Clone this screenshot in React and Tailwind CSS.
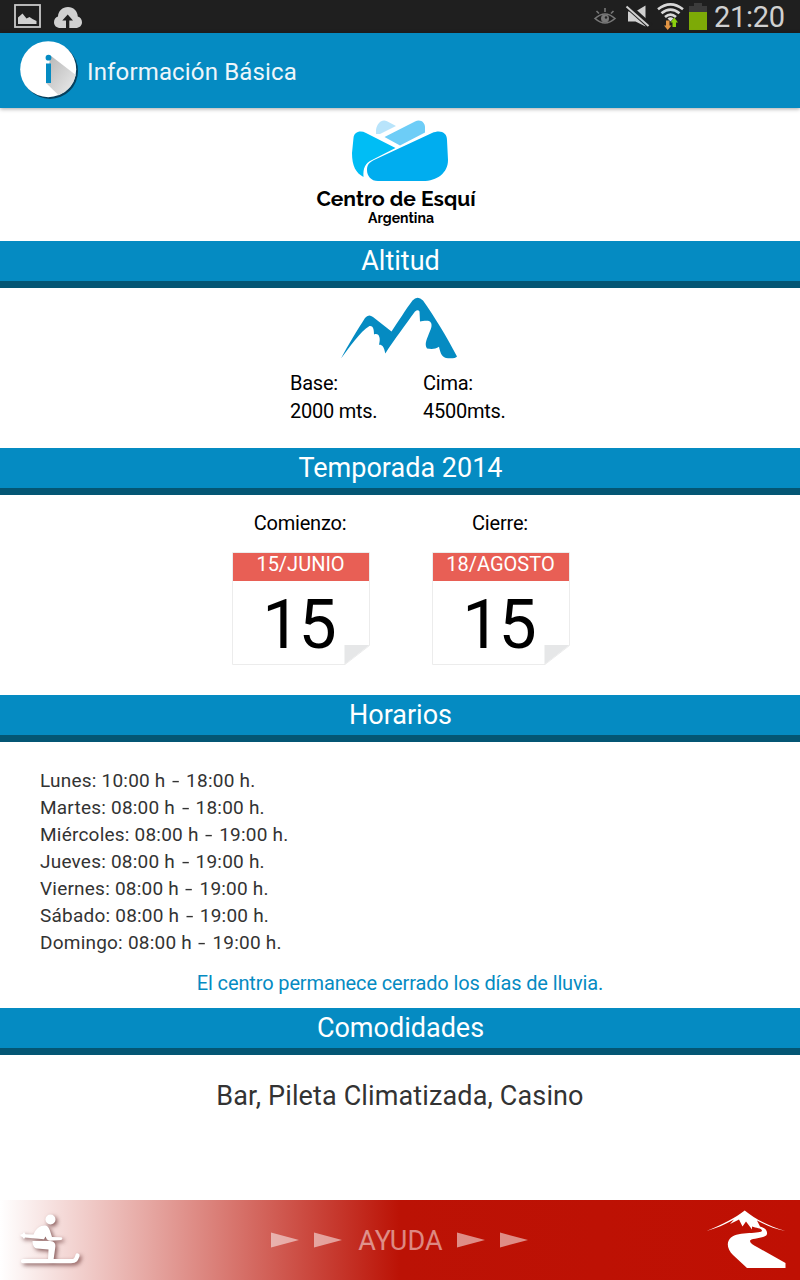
import React from 'react';

const hours = [
  ['Lunes: 10:00 h', '18:00 h.'],
  ['Martes: 08:00 h', '18:00 h.'],
  ['Miércoles: 08:00 h', '19:00 h.'],
  ['Jueves: 08:00 h', '19:00 h.'],
  ['Viernes: 08:00 h', '19:00 h.'],
  ['Sábado: 08:00 h', '19:00 h.'],
  ['Domingo: 08:00 h', '19:00 h.'],
];

function StatusBar() {
  return (
    <div className="flex h-[33px] shrink-0 items-center justify-between bg-[#1f1f1f]">
      <svg width="90" height="33" viewBox="0 0 90 33">
        <rect x="15" y="5" width="25" height="22" fill="none" stroke="#c8c8c8" strokeWidth="1.8" />
        <path d="M18 24V17.500l4.500-4 4 5 3-1.500 3 2 4 2V24z" fill="#d0d0d0" />
        <path d="M60.500 28C56.500 28 54 25.500 54 22.200c0-3 1.700-4.900 4-5.700C58.200 11 62.500 7 68 7c5.500 0 9.500 4 9.800 9.500 2.500.8 4.200 2.800 4.200 5.700 0 3.300-2.500 5.800-6.500 5.800H69.300V20.500H73L67.700 14.500 62.300 20.500H66V28z" fill="#d0d0d0" />
      </svg>
      <div className="flex h-full items-center">
        <svg width="130" height="33" viewBox="584 0 130 33">
          <g stroke="#777" fill="none" strokeWidth="1.6">
            <path d="M595 18.500Q605 9.500 615 18.500Q605 27.500 595 18.500z" />
            <path d="M596.500 11l2.500 2.500M605 8v4M613.500 11l-2.500 2.500" />
          </g>
          <circle cx="605" cy="18.500" r="4" fill="#777" />
          <circle cx="606" cy="17.500" r="1.200" fill="#222" />
          <path d="M628 11.500h7.500L645.500 5.500V26.500L635.500 21.500H628z" fill="#d0d0d0" />
          <path d="M626 4.500L650.500 26.500" stroke="#1f1f1f" strokeWidth="6" />
          <path d="M626.500 6.500L648.500 26" stroke="#d0d0d0" strokeWidth="2" />
          <g fill="none" stroke="#d8d8d8" strokeWidth="2.600">
            <path d="M658 9.300Q670.500-.500 683 9.300" />
            <path d="M661.500 13.300Q670.500 5.800 679.500 13.300" />
            <path d="M665 17Q670.500 12.200 676 17" />
          </g>
          <path d="M667.500 18.500Q670.500 16 673.500 18.500L670.500 21.500z" fill="#ddd" />
          <path d="M666 20.500h3.500v5h2L667.700 30 664 25.500h2z" fill="#e29544" />
          <path d="M672.500 27h3.500v-4.500h2L674.200 17.500 670.500 22.500h2z" fill="#8bd00e" />
          <path d="M694 3h8v3h5v6h-18V6h5z" fill="#3b3b3b" />
          <path d="M689 12h18v18h-18z" fill="#7daa07" />
        </svg>
        <span className="w-[86px] pt-0.5 text-[29px] leading-[33px] tracking-[-0.3px] text-[#d0d0d0]">21:20</span>
      </div>
    </div>
  );
}

function Header() {
  return (
    <header className="z-10 flex h-[75px] shrink-0 items-center bg-[#058bc2] pl-[17px] shadow-[0_1px_4px_rgba(0,0,0,0.35)]">
      <svg width="66" height="66" viewBox="17 38 66 66">
        <circle cx="50" cy="71" r="28" fill="#073f5c" />
        <circle cx="48.200" cy="69.200" r="28" fill="#fff" />
        <defs>
          <linearGradient id="longShadow" x1="0" y1="0" x2="1" y2="1">
            <stop offset="0" stopColor="#b5b5b5" />
            <stop offset="1" stopColor="#ededed" />
          </linearGradient>
        </defs>
        <path d="M50.500 55.500L75.800 75A28 28 0 0 1 58.700 95.200L46 83z" fill="url(#longShadow)" />
        <circle cx="48.500" cy="57.700" r="2.900" fill="#058bc2" />
        <path d="M46 63.500h5V83h-5z" fill="#058bc2" />
      </svg>
      <h1 className="ml-1 pt-0.5 text-[24px] leading-[30px] tracking-[0.15px] text-[#eef6fa]">Información Básica</h1>
    </header>
  );
}

function Logo() {
  return (
    <div className="flex h-[133px] shrink-0 flex-col items-center pt-[9px]">
      <svg width="102" height="68" viewBox="349 117 102 68">
        <path d="M376 134V130C377 123 382 118.500 387 121.200L396 126 380 134z" fill="#b8e4fb" />
        <path d="M384.500 137L415 121.500C420 118.500 425 122 425 127V132.500L400 145.500z" fill="#6dcdf7" />
        <path d="M352 153L353.500 138C354 132 360 130 366 133L395.500 148 372 160C365 163.500 363 168 363.500 177 356 173 352 166 352 153z" fill="#00bdf5" />
        <path d="M367 170C367 165 369 162.500 374 160L432 133C440 129.500 447 132 447 140L448 160C448 173 437 181 423 181H378C371 181 367 176 367 170z" fill="#00adef" />
      </svg>
      <div className="-ml-[8px] mt-0.5 whitespace-nowrap font-['Raleway',Lato,sans-serif] text-[21px] font-bold leading-6 text-black">Centro de Esquí</div>
      <div className="-mt-0.5 ml-0.5 font-['Raleway',Lato,sans-serif] text-[14px] font-bold leading-[18px] text-black">Argentina</div>
    </div>
  );
}

function Band({ children }) {
  return (
    <h2 className="h-[47px] shrink-0 border-b-[7px] border-[#045674] bg-[#058bc2] pl-px text-center text-[27px] leading-10 text-white">{children}</h2>
  );
}

function Calendar({ label, date }) {
  return (
    <div className="flex w-[138px] flex-col items-center">
      <div className="-ml-0.5 text-[20px] leading-7 tracking-[-0.2px] text-black">{label}</div>
      <div className="relative mt-[15px] h-[113px] w-[138px]">
        <svg className="absolute inset-0" width="138" height="113" viewBox="0 0 138 113">
          <path d="M.5.500H137.500V93.500L113 112.500H.5z" fill="#fff" stroke="#ececec" />
          <path d="M1 1h136v28H1z" fill="#e85f55" />
          <path d="M112.500 93H137.500L112.500 112.500z" fill="#e6e7e8" />
        </svg>
        <div className="relative flex flex-col items-center pt-px">
          <div className="-ml-px text-[20px] leading-[23px] text-white">{date}</div>
          <div className="-ml-[5px] mt-[9px] text-[68px] leading-[80px] tracking-[-2px] text-black">15</div>
        </div>
      </div>
    </div>
  );
}

function Arrow() {
  return (
    <svg width="28" height="16" viewBox="0 0 28 16">
      <path d="M0 .5L28 8 0 15.500z" fill="#fff" fillOpacity=".52" />
    </svg>
  );
}

function Footer() {
  return (
    <footer className="flex h-20 shrink-0 items-center justify-between bg-[linear-gradient(90deg,#fff_0px,#bb1205_400px,#bf1003_800px)]">
      <svg width="100" height="80" viewBox="0 1200 100 80" className="drop-shadow-[2px_2px_2px_rgba(60,0,0,0.6)]">
        <g fill="#fff">
          <circle cx="50.500" cy="1219.500" r="5" />
          <path d="M33.500 1234.500C36 1228 41 1225 45.500 1225.500 49 1226 50.500 1232 52 1237L61 1237.200C63 1237.500 62.500 1239.500 61 1240L50 1240.700C47 1240.500 46.500 1238.500 45.500 1236.500L44 1239.200 25 1237.500 24 1239 22.500 1237 20.500 1236V1234.500L22.500 1234 24 1232 25.500 1234.300z" />
          <path d="M32.500 1241H50C54.500 1241 56 1244 55.200 1248L53.500 1260H48L48.500 1249.500 37 1248.500C34 1248 32.500 1245 32.500 1241z" />
        </g>
        <path d="M23 1261.200H71C76 1261.200 76.500 1258.500 77.500 1255.500" fill="none" stroke="#fff" strokeWidth="4.200" strokeLinecap="round" />
      </svg>
      <div className="mr-0.5 flex items-center text-[27px] leading-8 text-white/50">
        <Arrow />
        <span className="w-[15px]" />
        <Arrow />
        <span className="w-[115px] pl-[3px] pt-0.5 text-center tracking-[0.1px]">AYUDA</span>
        <Arrow />
        <span className="w-[15px]" />
        <Arrow />
      </div>
      <svg width="100" height="80" viewBox="700 1200 100 80">
        <path d="M706.500 1231C723 1224 735 1218 744.700 1210.500 755 1219 768 1226 785.500 1231 774 1229 766 1225 757 1220.500L760 1226.500C765 1228 767.500 1230 767 1234 766 1239 750 1237.500 750 1241 750 1243 753 1245 757 1247L785.500 1263V1268H747L733 1255C727 1249 726 1242 731 1237.500 738 1231 762 1234.500 762 1230.500 761.500 1228 756 1228 752 1226.500L752 1229.500 746 1221.500 742.500 1226.500 739 1219.500 730 1224 734 1219.500C725 1224.500 716 1228.500 706.500 1231z" fill="#fff" />
      </svg>
    </footer>
  );
}

export default function App() {
  return (
    <div className="flex h-[1280px] w-[800px] flex-col overflow-hidden bg-white font-[Roboto,sans-serif] font-normal">
      <StatusBar />
      <Header />
      <Logo />
      <Band>Altitud</Band>
      <section className="flex h-[160px] shrink-0 flex-col items-center pt-[7px]">
        <svg className="-ml-0.5" width="120" height="66" viewBox="339 295 120 66">
          <path d="M341 358.500C347 347 358 329 365 318Q368.500 313.500 373 317L391.500 331.500C398 322 406 309 412.500 300.500Q417.500 295 423 300.500C434 316 447 337 457 356.500 456 358.500 450 358.500 446 358 441 356.500 440 351 439 346.700 435 349.500 431 349 427 348.500 424 344 427 339 430 331 432 327 432.500 322.500 429 321 425 320.500 422 321.500 420 321.500L419.500 311.500Q418 309 415 311.500C406 324 394 340 385.300 353.500 384 346 382 344.500 379 344.700 381 338 379 332.500 374 334.500 374 329 373 325.500 369.500 326 360 331.500 350 347 341 358.500z" fill="#058bc2" />
        </svg>
        <div className="ml-[11px] mt-2 grid grid-cols-[133px_98px] text-[20px] leading-7 tracking-[-0.25px] text-black">
          <span>Base:</span>
          <span>Cima:</span>
          <span>2000 mts.</span>
          <span>4500mts.</span>
        </div>
      </section>
      <Band>Temporada 2014</Band>
      <section className="flex h-[200px] shrink-0 justify-center gap-[62px] pl-0.5 pt-[14px]">
        <Calendar label="Comienzo:" date="15/JUNIO" />
        <Calendar label="Cierre:" date="18/AGOSTO" />
      </section>
      <Band>Horarios</Band>
      <section className="h-[266px] shrink-0 pt-[25px]">
        <ul className="pl-10 text-[19px] leading-[27px] tracking-[0.22px] text-[#333]">
          {hours.map(([open, close]) => (
            <li key={open}>
              {open} <span className="mx-[2.6px] inline-block scale-x-140">-</span> {close}
            </li>
          ))}
        </ul>
        <p className="mt-[13px] text-center text-[20px] leading-7 tracking-[-0.13px] text-[#058bc2]">El centro permanece cerrado los días de lluvia.</p>
      </section>
      <Band>Comodidades</Band>
      <section className="flex-1 pt-[21px] text-center text-[27px] leading-10 tracking-[0.13px] text-[#333]">Bar, Pileta Climatizada, Casino</section>
      <Footer />
    </div>
  );
}
